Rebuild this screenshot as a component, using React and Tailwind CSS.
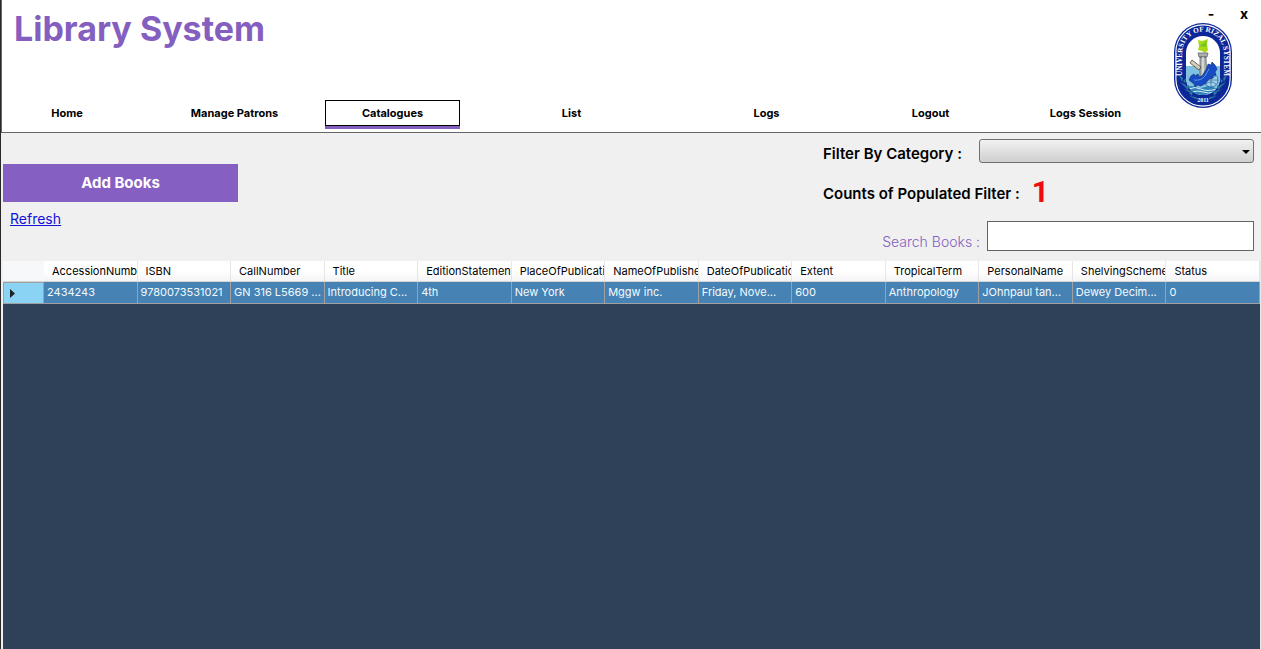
import React from "react";

const navItems = [
  { label: "Home" },
  { label: "Manage Patrons" },
  { label: "Catalogues", active: true },
  { label: "List" },
  { label: "Logs" },
  { label: "Logout" },
  { label: "Logs Session" },
];

const columns = [
  ["AccessionNumber", "2434243"],
  ["ISBN", "9780073531021"],
  ["CallNumber", "GN 316 L5669 ..."],
  ["Title", "Introducing C..."],
  ["EditionStatement", "4th"],
  ["PlaceOfPublication", "New York"],
  ["NameOfPublisher", "Mggw inc."],
  ["DateOfPublication", "Friday, Nove..."],
  ["Extent", "600"],
  ["TropicalTerm", "Anthropology"],
  ["PersonalName", "JOhnpaul tan..."],
  ["ShelvingScheme", "Dewey Decim..."],
  ["Status", "0"],
];

function Seal() {
  return (
    <svg viewBox="0 0 58 85" className="h-[85px] w-[58px]" role="img" aria-label="University of Rizal System">
      <defs>
        <path id="seal-arc" d="M8.5 52 V29 A20.5 20.5 0 0 1 49.5 29 V52" />
        <clipPath id="seal-inner">
          <rect x="12" y="13" width="34" height="59" rx="17" />
        </clipPath>
      </defs>
      <rect x="0" y="0" width="58" height="85" rx="29" fill="#0d2799" />
      <rect x="1.9" y="1.9" width="54.2" height="81.2" rx="27.1" fill="none" stroke="#fff" strokeWidth="1.1" />
      <g clipPath="url(#seal-inner)">
        <rect x="12" y="13" width="34" height="59" fill="#fff" />
        <rect x="12" y="43" width="34" height="30" fill="#80c1e2" />
        <path d="M13 64q5-2 9 0t9 0 8 0 7 0v9H12z" fill="#2f81b8" />
        <path d="M15 66q6-3 12 0t16 0M18 69q6-2 11 0t12 0" stroke="#d4edf5" fill="none" />
      </g>
      <path d="M24 27l1-4-1-6 4 1 6-2-1 5 1 6-3 3-3-2z" fill="#a8da17" />
      <path d="M25 23l8-5-1 6z" fill="#72c626" />
      <path d="M24 30h10l-1 4h-8zM26 34h6l1 26h-7z" fill="#adb1ad" stroke="#4e5961" strokeWidth=".7" />
      <path d="M29 34v25" stroke="#eceeed" strokeWidth="1.3" />
      <circle cx="37" cy="57" r="7" fill="#9ed2ea" stroke="#285591" strokeWidth=".7" />
      <path d="M30 57h14M37 50v14M32 53q5 4 10 0M32 61q5-4 10 0" stroke="#285591" strokeWidth=".6" fill="none" />
      <path d="M18 37l9 7-2 3-9-7z" fill="#d5ceb5" stroke="#333" strokeWidth=".7" />
      <path d="M15 57l2-4 3-2 1 2 3-2 1 3 3-1 5-8 1-4 3 1 1-3 3 3 2 4-2 3 1 3-3 1v2l-4 1-3 4-5 3-3-1-3 2-1-3z" fill="#164bc5" stroke="#082968" strokeWidth=".6" />
      <path d="M20 57q7 1 11-4l4-7" stroke="#67aae3" fill="none" strokeWidth=".8" />
      <g fill="#26799a">
        <path d="M5 52l4 3-1 4zM12 55l-1 5-2-2zM6 59l6 3v3zM15 62l-1 5-3-3zM10 66l7 2 1 3zM19 68l-1 5-3-3zM15 73l7 1 2 3zM53 52l-4 3 1 4zM46 55l1 5 2-2zM52 59l-6 3v3zM43 62l1 5 3-3zM48 66l-7 2-1 3zM39 68l1 5 3-3zM43 73l-7 1-2 3z" />
      </g>
      <text fill="#fff" fontFamily="Liberation Serif, serif" fontWeight="bold" fontSize="7.2">
        <textPath href="#seal-arc" startOffset="50%" textAnchor="middle">UNIVERSITY OF RIZAL SYSTEM</textPath>
      </text>
      <text x="29" y="79" textAnchor="middle" fill="#fff" fontFamily="Liberation Serif, serif" fontWeight="bold" fontSize="6">2011</text>
    </svg>
  );
}

export default function App() {
  return (
    <div className="flex min-h-screen flex-col border-l border-[#29292b] bg-[#f0f0f0] font-['Inter',sans-serif] text-black">
      <header className="flex border-b border-l border-[#666] bg-white">
        <div className="flex min-w-0 flex-1 flex-col justify-between pt-2">
          <h1 className="pl-3 text-[34px] leading-[42px] font-bold text-[#845fc0]">Library System</h1>
          <nav className="mb-[3px] grid grid-cols-[165fr_158fr_179fr_195fr_164fr_155fr_136fr]">
            {navItems.map(({ label, active }, i) => (
              <button
                key={label}
                className={
                  (i === 0 ? "w-[130px] " : "w-[135px] ") +
                  "flex flex-col text-center text-[11px] leading-6 font-bold"
                }
              >
                <span className={active ? "w-full border border-black" : "w-full border border-transparent"}>{label}</span>
                <span className={active ? "h-[3px] w-full bg-[#845fc0]" : "h-[3px] w-full"} />
              </button>
            ))}
          </nav>
        </div>
        <div className="flex w-[107px] shrink-0 flex-col pb-6 pl-5">
          <div className="flex h-[23px] items-center gap-[10px] pt-1 pl-[26px] text-[14px] font-bold">
            <button className="w-[22px]" aria-label="Minimize">-</button>
            <button className="w-6" aria-label="Close">x</button>
          </div>
          <Seal />
        </div>
      </header>

      <section className="flex h-32 justify-between pr-[7px] pl-[2px]">
        <div className="flex flex-col items-start pt-[31px]">
          <button className="h-[38px] w-[235px] bg-[#865fc3] text-[15px] font-bold text-white">Add Books</button>
          <a href="#refresh" className="mt-[7px] ml-[7px] text-[14px] leading-5 text-[#1212d8] underline">Refresh</a>
        </div>
        <div className="flex w-[431px] flex-col pt-[6px]">
          <div className="flex justify-between">
            <label htmlFor="category" className="pt-[3px] text-[15px] leading-6 font-semibold whitespace-nowrap">Filter By Category :</label>
            <div className="relative h-6 w-[275px]">
              <select
                id="category"
                defaultValue=""
                className="h-6 w-full appearance-none rounded-[3px] border border-[#707070] bg-linear-to-b from-[#f2f2f2] to-[#cfcfcf]"
              >
                <option value=""></option>
              </select>
              <svg viewBox="0 0 8 4" className="pointer-events-none absolute top-[11px] right-1 h-1 w-2" aria-hidden="true">
                <path d="M0 0h8L4 4z" />
              </svg>
            </div>
          </div>
          <div className="mt-[-3px] flex h-[58px] items-center gap-3 text-[15px] font-semibold">
            <span className="pt-1">Counts of Populated Filter :</span>
            <output className="font-['Roboto',sans-serif] text-[30px] leading-8 font-bold text-[#ef0b10]">1</output>
          </div>
          <div className="flex justify-end gap-[7px]">
            <label htmlFor="search" className="pt-[9px] text-[14px] leading-6 font-light text-[#845fc0]">Search Books :</label>
            <input id="search" type="text" className="h-[30px] w-[267px] border border-[#646464] bg-white px-2 text-[14px]" />
          </div>
        </div>
      </section>

      <main className="flex-1 border-r border-l-2 border-r-[#e8e8e8] border-l-[#f0f0f0] bg-[#2f4158]">
        <table className="w-full table-fixed border-separate border-spacing-0 text-left text-[11px]">
          <colgroup>
            <col className="w-[41px]" />
            {columns.map(([name]) => (
              <col key={name} />
            ))}
          </colgroup>
          <thead>
            <tr className="h-[21px] bg-linear-to-b from-white from-50% to-[#f3f3f5]">
              <th className="border-b border-[#d5d5d5] bg-[#f7f8fa] p-0" aria-label="Row" />
              {columns.map(([name]) => (
                <th key={name} scope="col" className="overflow-hidden border-r border-b border-r-[#e6e6e8] border-b-[#d5d5d5] py-0 pr-0 pl-2 leading-5 font-normal whitespace-nowrap">
                  {name}
                </th>
              ))}
            </tr>
          </thead>
          <tbody>
            <tr className="h-[22px] bg-[#4682b4] text-[#f2faff]">
              <th className="border border-[#a0a0a0] bg-[#8bd3f5] p-0 pl-[6px]" aria-label="Selected row">
                <svg viewBox="0 0 5 9" className="block h-[9px] w-[5px]" aria-hidden="true">
                  <path d="M0 0l5 4.5L0 9z" fill="#222" />
                </svg>
              </th>
              {columns.map(([name, value]) => (
                <td key={name} className="overflow-hidden border-r border-b border-[#a0a0a0] py-0 pr-0 pl-[3px] leading-[21px] whitespace-nowrap">
                  {value}
                </td>
              ))}
            </tr>
          </tbody>
        </table>
      </main>
    </div>
  );
}
